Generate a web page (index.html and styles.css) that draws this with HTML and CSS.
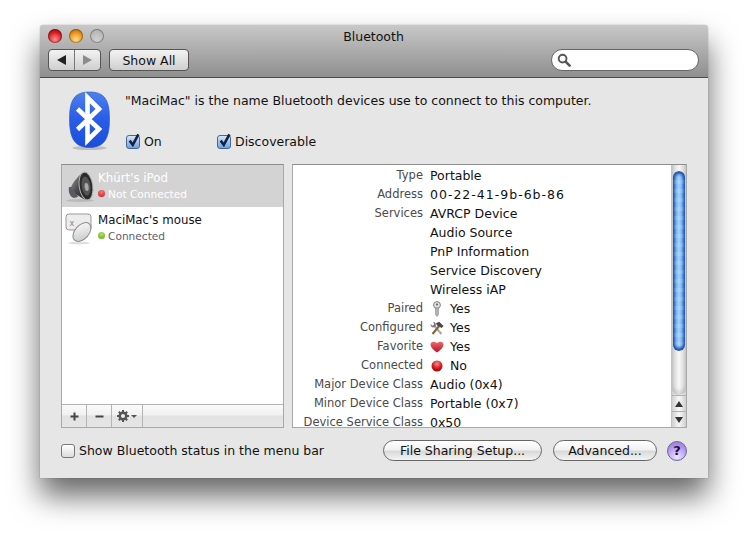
FILE: index.html
```html
<!DOCTYPE html>
<html lang="en">
<head>
    <meta charset="UTF-8">
    <meta name="viewport" content="width=device-width, initial-scale=1.0">
    <title>Bluetooth</title>
    <link rel="stylesheet" href="styles.css">
</head>
<body>
    <div class="window">
        <div class="titlebar">
            <div class="title-row">
                <div class="lights">
                    <span class="light red"></span>
                    <span class="light yellow"></span>
                    <span class="light off"></span>
                </div>
                <div class="title">Bluetooth</div>
            </div>
            <div class="tool-row">
                <div class="nav">
                    <span class="nav-btn"><i class="tri tri-left"></i></span>
                    <span class="nav-btn"><i class="tri tri-right"></i></span>
                </div>
                <button class="show-all">Show All</button>
                <div class="search">
                    <svg width="14" height="14" viewBox="0 0 14 14"><circle cx="5.6" cy="5.6" r="3.9" fill="#fff" stroke="#555" stroke-width="1.9"/><path d="M8.6 8.6 L12.6 12.6" stroke="#555" stroke-width="2.6" stroke-linecap="round"/></svg>
                </div>
            </div>
        </div>

        <div class="content">
            <div class="top">
                <svg class="bt-icon" width="43" height="60" viewBox="0 0 43 60">
                    <defs>
                        <linearGradient id="btBlue" x1="0" y1="0" x2="0" y2="1">
                            <stop offset="0" stop-color="#4f80ee"/>
                            <stop offset="0.45" stop-color="#2b5fe8"/>
                            <stop offset="1" stop-color="#1a4ddb"/>
                        </linearGradient>
                    </defs>
                    <ellipse cx="21.5" cy="57" rx="17" ry="2" fill="#000" opacity="0.18"/>
                    <path d="M21.5 1 C36 1 41.5 8 41.5 28 C41.5 48 36 56.5 21.5 56.5 C7 56.5 1.5 48 1.5 28 C1.5 8 7 1 21.5 1 Z" fill="url(#btBlue)" stroke="#2a55b8" stroke-width="0.6"/>
                    <path d="M9.5 18 L31 38 L19.5 49.5 L19.5 6.5 L31 18 L9.5 38.5" fill="none" stroke="#fff" stroke-width="4.6"/>
                </svg>
                <div class="top-text">
                    <div class="message">"MaciMac" is the name Bluetooth devices use to connect to this computer.</div>
                    <div class="checks">
                        <label class="check check-on"><span class="box checked"><svg width="15" height="16" viewBox="0 0 15 16"><path d="M3.6 7.6 L6.8 11.8 L12.4 1.4" fill="none" stroke="#15233f" stroke-width="2.6"/></svg></span>On</label>
                        <label class="check"><span class="box checked"><svg width="15" height="16" viewBox="0 0 15 16"><path d="M3.6 7.6 L6.8 11.8 L12.4 1.4" fill="none" stroke="#15233f" stroke-width="2.6"/></svg></span>Discoverable</label>
                    </div>
                </div>
            </div>

            <div class="panels">
                <div class="devices">
                    <div class="device-list">
                        <div class="device selected">
                            <svg class="device-icon" width="32" height="34" viewBox="0 0 32 34">
                                <defs>
                                    <linearGradient id="spk" x1="0" y1="0" x2="1" y2="1">
                                        <stop offset="0" stop-color="#a0a0a0"/>
                                        <stop offset="0.5" stop-color="#4d4d4d"/>
                                        <stop offset="1" stop-color="#1d1d1d"/>
                                    </linearGradient>
                                </defs>
                                <ellipse cx="15" cy="31.500" rx="14" ry="1.500" fill="#000" opacity="0.12"/>
                                <path d="M4 18 C3 23 5 28 9 29 L13 28 L9 18 Z" fill="#5b5b66"/>
                                <path d="M19 3 C15 5 8 13 6 18 C7 22 12 27 21 31 Z" fill="url(#spk)"/>
                                <ellipse cx="21" cy="17" rx="6.800" ry="14" transform="rotate(-8 21 17)" fill="#2c2c2c" stroke="#b4b4b4" stroke-width="1"/>
                                <ellipse cx="21" cy="17" rx="4.300" ry="9.500" transform="rotate(-8 21 17)" fill="#555"/>
                                <ellipse cx="21.500" cy="18" rx="2" ry="4" transform="rotate(-8 21 17)" fill="#a8a8a8"/>
                            </svg>
                            <div class="device-text">
                                <div class="device-name">Khürt's iPod</div>
                                <div class="device-status"><span class="dot dot-red"></span>Not Connected</div>
                            </div>
                        </div>
                        <div class="device">
                            <svg class="device-icon" width="32" height="34" viewBox="0 0 32 34">
                                <defs>
                                    <linearGradient id="mouseBody" x1="0" y1="0" x2="1" y2="1">
                                        <stop offset="0" stop-color="#fff"/>
                                        <stop offset="1" stop-color="#c4c4c4"/>
                                    </linearGradient>
                                </defs>
                                <ellipse cx="14" cy="32" rx="11" ry="1.500" fill="#000" opacity="0.12"/>
                                <rect x="1" y="3" width="25" height="16" rx="3" fill="#ececec" stroke="#9a9a9a"/>
                                <text class="x-mark" x="4.500" y="15">x</text>
                                <ellipse cx="17" cy="21" rx="7" ry="11" transform="rotate(42 17 21)" fill="url(#mouseBody)" stroke="#8c8c8c"/>
                            </svg>
                            <div class="device-text">
                                <div class="device-name">MaciMac's mouse</div>
                                <div class="device-status"><span class="dot dot-green"></span>Connected</div>
                            </div>
                        </div>
                    </div>
                    <div class="device-toolbar">
                        <span class="tool"><svg width="11" height="11" viewBox="0 0 11 11"><path d="M5.500 1.500 V9.500 M1.500 5.500 H9.500" stroke="#444" stroke-width="2"/></svg></span>
                        <span class="tool"><svg width="11" height="11" viewBox="0 0 11 11"><path d="M1.500 5.500 H9.500" stroke="#444" stroke-width="2"/></svg></span>
                        <span class="tool tool-gear">
                            <svg width="12" height="12" viewBox="0 0 12 12"><circle cx="6" cy="6" r="3.400" fill="none" stroke="#555" stroke-width="2.200"/><path d="M6 0 V12 M0 6 H12 M1.800 1.800 L10.200 10.200 M10.200 1.800 L1.800 10.200" stroke="#555" stroke-width="2"/><circle cx="6" cy="6" r="2" fill="#ececec"/></svg>
                            <i class="tri-down"></i>
                        </span>
                    </div>
                </div>

                <div class="details">
                    <div class="detail-rows">
                        <div class="label">Type</div><div class="value">Portable</div>
                        <div class="label">Address</div><div class="value address">00-22-41-9b-6b-86</div>
                        <div class="label">Services</div><div class="value">AVRCP Device</div>
                        <div class="label"></div><div class="value">Audio Source</div>
                        <div class="label"></div><div class="value">PnP Information</div>
                        <div class="label"></div><div class="value">Service Discovery</div>
                        <div class="label"></div><div class="value">Wireless iAP</div>
                        <div class="label">Paired</div>
                        <div class="value">
                            <svg class="state-icon" width="14" height="16" viewBox="0 0 14 16"><circle cx="7" cy="4" r="3.400" fill="#e2e2e2" stroke="#808080"/><circle cx="7" cy="3.500" r="1.100" fill="#666"/><path d="M5.600 7 H8.400 V13.500 L7 15.500 L5.600 13.500 Z" fill="#b4b4b4" stroke="#808080" stroke-width="0.600"/></svg>Yes
                        </div>
                        <div class="label">Configured</div>
                        <div class="value">
                            <svg class="state-icon" width="14" height="14" viewBox="0 0 14 14"><path d="M11.500 13 L4 4.500" stroke="#a8a8a8" stroke-width="2"/><path d="M0.500 3 L2.500 4.800 L4.200 3.400 L3.200 1 C5.500 1 6.500 3 5.500 5.500 L3 6.500 C1.200 6 0.500 4.800 0.500 3 Z" fill="#777"/><path d="M2.500 13 L10 4" stroke="#8a5f35" stroke-width="2"/><path d="M6 2.200 L9.200 0.800 L13.600 5 L11.600 7 L8.800 5.200 L7 4.400 Z" fill="#4a4a4a"/></svg>Yes
                        </div>
                        <div class="label">Favorite</div>
                        <div class="value">
                            <svg class="state-icon" width="14" height="13" viewBox="0 0 14 13"><defs><linearGradient id="heart" x1="0" y1="0" x2="0" y2="1"><stop offset="0" stop-color="#ef6a72"/><stop offset="1" stop-color="#b80f1c"/></linearGradient></defs><path d="M7 12.500 C3 9.500 0.500 7.500 0.500 4.500 C0.500 2 3.500 0.500 7 3 C10.500 0.500 13.500 2 13.500 4.500 C13.500 7.500 11 9.500 7 12.500 Z" fill="url(#heart)"/></svg>Yes
                        </div>
                        <div class="label">Connected</div>
                        <div class="value">
                            <svg class="state-icon" width="14" height="14" viewBox="0 0 14 14"><defs><radialGradient id="redBall" cx="0.5" cy="0.3" r="0.7"><stop offset="0" stop-color="#f48b8b"/><stop offset="0.6" stop-color="#d81a1e"/><stop offset="1" stop-color="#8c0b0e"/></radialGradient></defs><circle cx="7" cy="7" r="5.500" fill="url(#redBall)"/></svg>No
                        </div>
                        <div class="label">Major Device Class</div><div class="value">Audio (0x4)</div>
                        <div class="label">Minor Device Class</div><div class="value">Portable (0x7)</div>
                        <div class="label">Device Service Class</div><div class="value">0x50</div>
                    </div>
                    <div class="scrollbar">
                        <div class="scroll-track"><div class="scroll-thumb"></div></div>
                        <div class="scroll-arrow"><i class="tri-up-dark"></i></div>
                        <div class="scroll-arrow"><i class="tri-down-dark"></i></div>
                    </div>
                </div>
            </div>

            <div class="bottom">
                <label class="check"><span class="box"></span>Show Bluetooth status in the menu bar</label>
                <div class="bottom-btns">
                    <button class="pill pill-sharing">File Sharing Setup...</button>
                    <button class="pill pill-advanced">Advanced...</button>
                    <span class="help">?</span>
                </div>
            </div>
        </div>
    </div>
</body>
</html>
```

FILE: styles.css
```css
body {
    margin: 0;
    background: #fff;
    font-family: "DejaVu Sans", sans-serif;
    font-size: 12.5px;
    color: #111;
    height: 534px;
    overflow: hidden;
}

.window {
    width: 668px;
    height: 453px;
    margin: 25px 0 0 40px;
    background: #e6e6e6;
    border-radius: 4px 4px 0 0;
    box-shadow: 0 18px 30px rgba(0, 0, 0, 0.6), 0 0 1px rgba(0, 0, 0, 0.6);
    display: flex;
    flex-direction: column;
}

.titlebar {
    height: 53px;
    flex: none;
    box-sizing: border-box;
    padding: 1px 9px 0 8px;
    background: linear-gradient(#c8c8c8, #8f8f8f);
    border-bottom: 1px solid #4b4b4b;
    border-radius: 4px 4px 0 0;
}

.title-row {
    position: relative;
    height: 20px;
    display: flex;
    align-items: center;
}

.lights {
    display: flex;
    gap: 7px;
}

.light {
    width: 14px;
    height: 14px;
    border-radius: 50%;
    border: 0;
    box-shadow: inset 0 0 0 1px rgba(0, 0, 0, 0.3);
}

.red {
    background: radial-gradient(circle at 50% 75%, #ff8c8c, #d3161e 60%, #8d0d13);
}

.yellow {
    background: radial-gradient(circle at 50% 75%, #ffe08a, #e88a14 60%, #a85a0c);
}

.off {
    background: radial-gradient(circle at 50% 75%, #d0d0d0, #a9a9a9);
}

.title {
    position: absolute;
    left: 0;
    right: 0;
    text-align: center;
}

.tool-row {
    display: flex;
    align-items: flex-start;
    margin-top: 3px;
}

.nav {
    display: flex;
    width: 53px;
    height: 22px;
    box-sizing: border-box;
    border: 1px solid #555;
    border-radius: 4px;
    background: linear-gradient(#f3f3f3, #cfcfcf);
}

.nav-btn {
    flex: 1;
    display: flex;
    align-items: center;
    justify-content: center;
}

.nav-btn + .nav-btn {
    border-left: 1px solid #777;
}

.tri {
    width: 0;
    height: 0;
    border-top: 5px solid transparent;
    border-bottom: 5px solid transparent;
}

.tri-left {
    border-right: 9px solid #222;
}

.tri-right {
    border-left: 9px solid #8c8c8c;
}

.show-all {
    width: 80px;
    height: 22px;
    margin-left: 8px;
    padding: 0;
    border: 1px solid #555;
    border-radius: 4px;
    background: linear-gradient(#f3f3f3, #cfcfcf);
    font: inherit;
    color: #111;
}

.search {
    width: 148px;
    height: 22px;
    margin-left: auto;
    box-sizing: border-box;
    padding: 3px 0 0 5px;
    background: #fff;
    border: 1px solid #666;
    border-radius: 11px;
}

.content {
    flex: 1;
    padding: 13px 21px 0;
    display: flex;
    flex-direction: column;
}

.top {
    height: 73px;
    display: flex;
}

.bt-icon {
    margin-left: 7px;
    flex: none;
}

.top-text {
    margin-left: 14px;
}

.message {
    height: 41px;
    padding-top: 2px;
    white-space: nowrap;
}

.checks {
    display: flex;
    margin-left: 1px;
}

.check {
    display: flex;
    align-items: center;
    gap: 4px;
}

.check-on {
    width: 91px;
}

.box {
    width: 14px;
    height: 14px;
    border: 1px solid #777;
    border-radius: 3px;
    background: linear-gradient(#fff, #dcdcdc);
    box-sizing: border-box;
    flex: none;
    position: relative;
}

.box.checked {
    background: linear-gradient(#d6e6fa, #6ea2e2);
    border-color: #44688f;
}

.box svg {
    position: absolute;
    left: -1px;
    top: -3px;
}

.panels {
    display: flex;
    gap: 8px;
    height: 264px;
}

.devices {
    width: 223px;
    box-sizing: border-box;
    border: 1px solid #a8a8a8;
    border-top-color: #8d8d8d;
    background: #fff;
    display: flex;
    flex-direction: column;
}

.device-list {
    flex: 1;
}

.device {
    height: 42px;
    display: flex;
    padding: 4px 0 0 3px;
    box-sizing: border-box;
}

.device.selected {
    background: #d3d3d3;
    color: #fff;
}

.device-icon {
    flex: none;
}

.device-text {
    margin-left: 1px;
    padding-top: 1px;
}

.device-name {
    height: 15px;
    line-height: 17px;
    font-size: 11.8px;
}

.device-status {
    display: flex;
    align-items: center;
    gap: 3px;
    height: 17px;
    font-size: 10.6px;
    color: #5c6070;
}

.selected .device-status {
    color: #fff;
}

.dot {
    width: 7px;
    height: 7px;
    border-radius: 50%;
    flex: none;
}

.dot-red {
    background: radial-gradient(circle at 50% 30%, #f27a7a, #cf1218);
}

.dot-green {
    background: radial-gradient(circle at 50% 30%, #b4e06a, #5fa814);
}

.x-mark {
    font-size: 8px;
    fill: #888;
}

.device-toolbar {
    height: 22px;
    flex: none;
    display: flex;
    border-top: 1px solid #b4b4b4;
    background: linear-gradient(#fafafa 0, #f1f1f1 45%, #e2e2e2 50%, #e6e6e6 100%);
}

.tool {
    width: 24px;
    display: flex;
    align-items: center;
    justify-content: center;
    border-right: 1px solid #b4b4b4;
}

.tool-gear {
    width: 30px;
    gap: 2px;
}

.tri-down {
    width: 0;
    height: 0;
    border-left: 3px solid transparent;
    border-right: 3px solid transparent;
    border-top: 3px solid #555;
}

.details {
    flex: 1;
    box-sizing: border-box;
    border: 1px solid #a8a8a8;
    border-top-color: #8d8d8d;
    background: #fff;
    display: flex;
    overflow: hidden;
}

.detail-rows {
    flex: 1;
    display: grid;
    grid-template-columns: 130px 1fr;
    column-gap: 7px;
    grid-auto-rows: 19px;
    padding-top: 1px;
    overflow: hidden;
}

.label {
    text-align: right;
    color: #4a4a4a;
    font-size: 11.5px;
    line-height: 18px;
    white-space: nowrap;
}

.value {
    line-height: 19px;
    display: flex;
    align-items: center;
    white-space: nowrap;
}

.address {
    letter-spacing: 1px;
}

.state-icon {
    width: 14px;
    margin-right: 6px;
    flex: none;
}

.scrollbar {
    width: 14px;
    flex: none;
    display: flex;
    flex-direction: column;
    border-left: 1px solid #c4c4c4;
    background: linear-gradient(90deg, #cfcfcf, #f8f8f8 50%, #cfcfcf);
}

.scroll-track {
    height: 230px;
    flex: none;
    padding-top: 6px;
    box-sizing: border-box;
    border-bottom-left-radius: 7px;
    border-bottom-right-radius: 7px;
    box-shadow: inset 0 -4px 4px rgba(0, 0, 0, 0.12);
}

.scroll-thumb {
    height: 180px;
    margin: 0 1px;
    border-radius: 6px;
    box-sizing: border-box;
    box-shadow: inset 0 3px 3px #1d4fa8, inset 0 -3px 3px #1d4fa8;
    background:
        repeating-linear-gradient(rgba(255, 255, 255, 0.12) 0 4px, rgba(255, 255, 255, 0) 4px 9px),
        linear-gradient(90deg, #1f5fc8, #7db6f3 30%, #a7d2fa 50%, #7db6f3 70%, #1f5fc8);
}

.scroll-arrow {
    height: 16px;
    display: flex;
    align-items: center;
    justify-content: center;
    border-top: 1px solid #b0b0b0;
}

.tri-up-dark {
    width: 0;
    height: 0;
    border-left: 4px solid transparent;
    border-right: 4px solid transparent;
    border-bottom: 6px solid #333;
}

.tri-down-dark {
    width: 0;
    height: 0;
    border-left: 4px solid transparent;
    border-right: 4px solid transparent;
    border-top: 6px solid #333;
}

.bottom {
    display: flex;
    align-items: center;
    height: 21px;
    margin-top: 12px;
}

.bottom-btns {
    margin-left: auto;
    display: flex;
    align-items: center;
}

.pill {
    height: 21px;
    padding: 0;
    border: 1px solid #666;
    border-radius: 11px;
    background: linear-gradient(#ffffff, #f2f2f2 45%, #d9d9d9 55%, #f4f4f4);
    font: inherit;
    color: #111;
}

.pill-sharing {
    width: 159px;
    margin-right: 11px;
}

.pill-advanced {
    width: 104px;
    margin-right: 10px;
}

.help {
    width: 20px;
    height: 20px;
    box-sizing: border-box;
    border: 1px solid #6a6a8c;
    border-radius: 50%;
    background: radial-gradient(circle at 50% 85%, #efe4ff, #a585ea 75%);
    font-weight: bold;
    font-size: 13px;
    line-height: 18px;
    text-align: center;
    color: #1c1030;
}
```
